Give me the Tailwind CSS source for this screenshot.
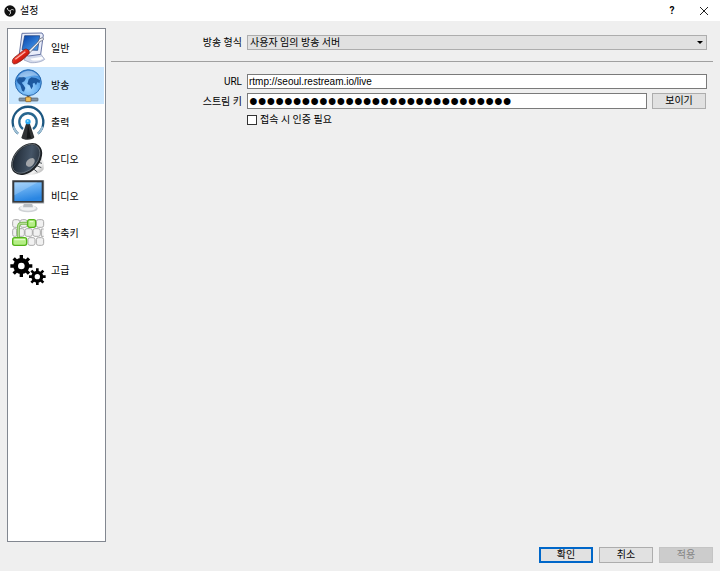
<!DOCTYPE html>
<html lang="ko">
<head>
  <meta charset="UTF-8">
  <meta name="viewport" content="width=device-width, initial-scale=1.0">
  <title>설정</title>
  <script src="https://cdn.jsdelivr.net/npm/@tailwindcss/browser@4"></script>
</head>
<body class="bg-[#efefef] flex flex-col h-screen text-[10px] leading-[15px] text-black font-['Roboto','Noto_Sans_CJK_KR',sans-serif]">
  <!-- Title bar -->
  <header class="h-[21px] shrink-0 bg-white flex items-center pl-1">
    <svg class="size-3" viewBox="0 0 36 36">
      <circle cx="18" cy="18" r="17" fill="#111"/>
      <path d="M10 9c0 5 3 8 8 9M29 15c-4-3-9-1-11 3M16 29c4-3 5-7 2-11" fill="none" stroke="#ddd" stroke-width="3"/>
    </svg>
    <h1 class="ml-1 flex-1">설정</h1>
    <button class="w-8 h-5 flex items-center justify-center font-bold" aria-label="도움말">?</button>
    <button class="w-8 h-5 flex items-center justify-center" aria-label="닫기">
      <svg class="size-2" viewBox="0 0 8 8"><path d="M0 0l8 8M8 0l-8 8" stroke="#222" fill="none"/></svg>
    </button>
  </header>

  <div class="flex flex-1 min-h-0 pl-[7px] pr-[7px] pt-[7px]">
    <!-- Categories -->
    <nav class="w-[99px] shrink-0 bg-white border border-[#828790] py-px px-px">
      <a href="#general" class="flex items-center h-[37px] gap-[5px]">
        <svg class="size-[37px] shrink-0" viewBox="27 90 111 111">
          <defs>
            <linearGradient id="screen" x1="0" y1="0" x2="1" y2="1"><stop offset="0" stop-color="#0742a8"/><stop offset="1" stop-color="#4da4f5"/></linearGradient>
            <linearGradient id="handle" x1="0" y1="0" x2="1" y2="1"><stop offset="0" stop-color="#ff8b7c"/><stop offset=".5" stop-color="#df2417"/><stop offset="1" stop-color="#8c0c06"/></linearGradient>
          </defs>
          <path d="M80 165l42-3 12 16c-8 7-25 11-42 10l-20-8z" fill="#d4daeb" stroke="#8793b5" stroke-width="2"/>
          <path d="M90 176l36-6 4 6c-9 5-22 7-34 5z" fill="#fff"/>
          <path d="M66 100l60-1 4 6-8 58-36 5-28-6z" fill="#e9edfa" stroke="#6674a4" stroke-width="3"/>
          <path d="M74 107l45 0-6 44-47-2z" fill="url(#screen)" stroke="#173874" stroke-width="2"/>
          <path d="M83 155l30-29 5-9 9-4 4 4-4 5-7 2-5 7-28 30z" fill="#f1f3f7" stroke="#4a5265" stroke-width="2"/>
          <path d="M37 184c0-9 9-14 17-20l20-16c7-4 18 6 13 13-9 9-20 20-31 26-9 6-19 8-19-3z" fill="url(#handle)" stroke="#741310" stroke-width="2"/>
          <path d="M46 178l30-23" stroke="#ffb4aa" stroke-width="4"/>
        </svg>
        <span>일반</span>
      </a>
      <a href="#stream" aria-current="page" class="flex items-center h-[37px] gap-[5px] bg-[#cce8ff]">
        <svg class="size-[37px] shrink-0" viewBox="27 201 111 111">
          <defs>
            <radialGradient id="globe" cx=".5" cy=".7" r=".7"><stop offset="0" stop-color="#a5d7ff"/><stop offset=".55" stop-color="#67aff0"/><stop offset="1" stop-color="#2b78cf"/></radialGradient>
          </defs>
          <circle cx="85" cy="248" r="39" fill="url(#globe)" stroke="#2869ae" stroke-width="3"/>
          <path d="M50 240l8-8 12-2 8 5-5 9-8 4 6 8 5 8-4 11-6-3-5-16-8-8zM86 238l8-6 14 2 12 7-1 8-7-2-4 9-5-8-5 3 1 8-5 9-5-12-7-4z" fill="#1c589f"/>
          <path d="M54 231c12-23 47-27 62-2-19-8-40 8-62 2z" fill="#fff" opacity=".4"/>
          <path d="M85 287v8" stroke="#555" stroke-width="7"/>
          <rect x="57" y="294" width="57" height="9" rx="2" fill="#7f92a4" stroke="#4c5a68" stroke-width="2"/>
          <rect x="77" y="291" width="16" height="14" rx="2" fill="#f0bd58" stroke="#78521b" stroke-width="2"/>
        </svg>
        <span>방송</span>
      </a>
      <a href="#output" class="flex items-center h-[37px] gap-[5px]">
        <svg class="size-[37px] shrink-0" viewBox="27 12 111 111">
          <g fill="none">
            <path d="M54 101a46 46 0 1 1 60 0" stroke="#1c5781" stroke-width="7"/>
            <path d="M54 101a46 46 0 0 1-14-21M114 101a46 46 0 0 0 14-21" stroke="#9dbfd5" stroke-width="6"/>
            <path d="M69 87a26 26 0 1 1 30 0" stroke="#27668f" stroke-width="7"/>
          </g>
          <path d="M79 69h10l14 43c-3 9-33 10-39 1z" fill="#303234"/>
          <path d="M84 75l9 39-13 2z" fill="#151719"/>
          <circle cx="84" cy="65" r="8" fill="#2aa8f3"/>
          <circle cx="83" cy="63" r="3" fill="#8fe0ff"/>
        </svg>
        <span>출력</span>
      </a>
      <a href="#audio" class="flex items-center h-[37px] gap-[5px]">
        <svg class="size-[37px] shrink-0" viewBox="27 123 111 111">
          <defs>
            <linearGradient id="cone" x1="0" y1="0" x2="1" y2="1"><stop offset="0" stop-color="#131b25"/><stop offset=".6" stop-color="#455567"/><stop offset="1" stop-color="#1b222b"/></linearGradient>
            <linearGradient id="magnet" x1="0" y1="0" x2="1" y2="1"><stop offset="0" stop-color="#777777"/><stop offset=".7" stop-color="#f2f2f2"/><stop offset="1" stop-color="#999999"/></linearGradient>
          </defs>
          <path d="M118 160c4 12 6 18 13 26v22c-8 13-32 19-67 17z" fill="url(#magnet)"/>
          <path d="M112 186l14 4M108 196l16 7M101 207l11 9" stroke="#4b5156" stroke-width="3"/>
          <ellipse cx="80" cy="177" rx="52" ry="35" transform="rotate(-48 80 177)" fill="url(#cone)" stroke="#1e2226" stroke-width="6"/>
          <ellipse cx="78" cy="176" rx="50" ry="33" transform="rotate(-48 78 176)" fill="none" stroke="#78828b" stroke-width="2"/>
          <path d="M78 194c-1-11 9-20 20-20 8 2 8 14 1 20-7 9-17 8-21 0z" fill="#a3a6aa"/>
        </svg>
        <span>오디오</span>
      </a>
      <a href="#video" class="flex items-center h-[37px] gap-[5px]">
        <svg class="size-[37px] shrink-0" viewBox="27 -36 111 111">
          <defs>
            <linearGradient id="panel" x1="0" y1="0" x2=".3" y2="1"><stop offset="0" stop-color="#8fc9fb"/><stop offset="1" stop-color="#2a86e2"/></linearGradient>
          </defs>
          <ellipse cx="84" cy="56" rx="29" ry="11" fill="#cfd2d5"/>
          <ellipse cx="84" cy="54" rx="24" ry="8" fill="#f1f2f3"/>
          <path d="M72 39h24l3 13H69z" fill="#b9bdc1"/>
          <rect x="36" y="-30" width="97" height="72" rx="2" fill="#d0d3d6"/>
          <rect x="37" y="-29" width="94" height="67" fill="#363a3e"/>
          <rect x="43" y="-23" width="82" height="56" fill="url(#panel)"/>
          <path d="M43-23h70L43 16z" fill="#fff" opacity=".2"/>
        </svg>
        <span>비디오</span>
      </a>
      <a href="#hotkeys" class="flex items-center h-[37px] gap-[5px]">
        <svg class="size-[37px] shrink-0" viewBox="27 75 111 111">
          <g fill="#f1f1f1" stroke="#aaa" stroke-width="3">
            <rect x="38" y="89" width="21" height="23" rx="6"/>
            <rect x="61" y="89" width="20" height="23" rx="6"/>
            <rect x="109" y="89" width="22" height="23" rx="6"/>
            <rect x="38" y="116" width="13" height="23" rx="5"/>
            <rect x="50" y="116" width="23" height="23" rx="6"/>
            <rect x="75" y="116" width="22" height="23" rx="6"/>
            <rect x="99" y="116" width="22" height="23" rx="6"/>
            <path d="M131 117h-7v22h7"/>
            <rect x="84" y="143" width="21" height="23" rx="6"/>
            <rect x="109" y="143" width="22" height="23" rx="6"/>
          </g>
          <path d="M55 144v-30c0-8 3-14 11-14h18" fill="none" stroke="#78b94f" stroke-width="9"/>
          <path d="M55 144v-30c0-8 3-14 11-14h18" fill="none" stroke="#b6dc99" stroke-width="4"/>
          <g fill="#b5ee86" stroke="#55b51b" stroke-width="4">
            <rect x="83" y="89" width="24" height="23" rx="6"/>
            <rect x="38" y="143" width="42" height="23" rx="6"/>
          </g>
          <path d="M43 149h32M89 95h11" stroke="#e1fbc9" stroke-width="4"/>
        </svg>
        <span>단축키</span>
      </a>
      <a href="#advanced" class="flex items-center h-[37px] gap-[5px]">
        <svg class="size-[37px] shrink-0" viewBox="27 186 111 111">
          <!-- eight teeth per gear, drawn as four bars through the hub -->
          <g stroke="#000" stroke-width="10">
            <path d="M64 195v66M31 228h66M41 205l46 46M87 205l-46 46"/>
            <circle cx="64" cy="228" r="24" stroke="none"/>
            <circle cx="64" cy="228" r="10" fill="#fff" stroke="none"/>
          </g>
          <g stroke="#000" stroke-width="8">
            <path d="M112 235v50M87 260h50M94 242l36 36M130 242l-36 36"/>
            <circle cx="112" cy="260" r="18" stroke="none"/>
            <circle cx="112" cy="260" r="8" fill="#fff" stroke="none"/>
          </g>
        </svg>
        <span>고급</span>
      </a>
    </nav>

    <!-- Stream settings -->
    <main class="flex-1 min-w-0 ml-[5px]">
      <form class="flex flex-col">
        <div class="flex items-center gap-[5px] pt-[7px] pr-[6px]">
          <label for="stream-type" class="w-[131px] shrink-0 text-right">방송 형식</label>
          <div class="relative flex-1 flex">
            <select id="stream-type" class="appearance-none w-full h-[15px] pl-[2px] leading-[13px] bg-[#e1e1e1] border border-[#adadad]">
              <option>사용자 임의 방송 서버</option>
            </select>
            <svg class="absolute right-1 top-[6px] w-[6px] h-[3px] pointer-events-none" viewBox="0 0 6 3"><path d="M0 0h6L3 3z"/></svg>
          </div>
        </div>
        <hr class="border-[#a0a0a0] mt-[11px] mb-3">
        <div class="flex items-center gap-[5px] pr-[6px]">
          <label for="server-url" class="w-[131px] shrink-0 text-right">URL</label>
          <input id="server-url" type="text" value="rtmp://seoul.restream.io/live" class="flex-1 min-w-0 h-[15px] pl-px bg-white border border-[#7a7a7a] font-['Liberation_Sans',sans-serif]">
        </div>
        <div class="flex items-center gap-[5px] mt-1 pr-[7px]">
          <label for="stream-key" class="w-[131px] shrink-0 text-right">스트림 키</label>
          <input id="stream-key" type="password" value="000000000000000000000000000000" class="flex-1 min-w-0 h-4 pl-px bg-white border border-[#7a7a7a] text-[25px] leading-[14px] font-['Liberation_Sans',sans-serif]">
          <button type="button" class="w-[54px] h-4 leading-[14px] bg-[#e1e1e1] border border-[#adadad]">보이기</button>
        </div>
        <div class="flex items-center gap-[3px] mt-[3px] pl-[136px]">
          <input id="use-auth" type="checkbox" class="appearance-none size-[10px] bg-white border border-[#333] checked:bg-[#333]">
          <label for="use-auth">접속 시 인증 필요</label>
        </div>
      </form>
    </main>
  </div>

  <!-- Dialog buttons -->
  <footer class="shrink-0 flex justify-end gap-[6px] pt-[5px] pb-2 pr-[7px]">
    <button class="w-[54px] h-4 leading-3 bg-[#e1e1e1] border-2 border-[#0067c9]">확인</button>
    <button class="w-[54px] h-4 leading-[14px] bg-[#e1e1e1] border border-[#adadad]">취소</button>
    <button disabled class="w-[54px] h-4 leading-[14px] bg-[#cccccc] border border-[#c4c4c4] text-[#838383]">적용</button>
  </footer>
</body>
</html>
